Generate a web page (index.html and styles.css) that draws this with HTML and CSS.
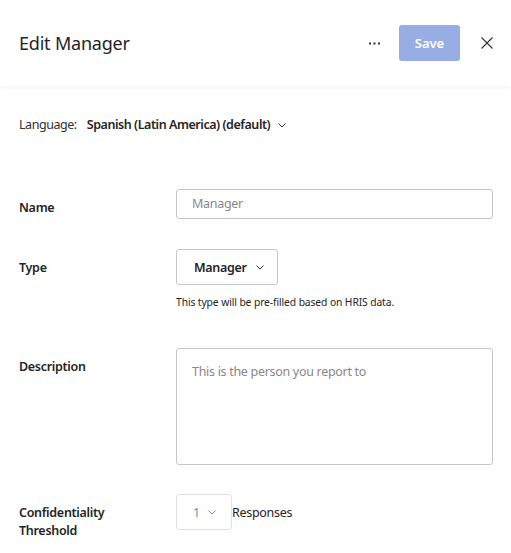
FILE: index.html
```html
<!DOCTYPE html>
<html>
<head>
<meta charset="utf-8">
<link rel="stylesheet" href="styles.css">
</head>
<body>
<div class="panel">
  <header class="header">
    <h1 class="title">Edit Manager</h1>
    <div class="actions">
      <svg class="more" width="11" height="3" viewBox="0 0 11 3"><rect x="0" y="0.5" width="2" height="2" fill="#323130"/><rect x="4.5" y="0.5" width="2" height="2" fill="#323130"/><rect x="9" y="0.5" width="2" height="2" fill="#323130"/></svg>
      <button class="save">Save</button>
      <svg class="close" width="12" height="12" viewBox="0 0 12 12"><path d="M0.5 0.5L11.5 11.5M11.5 0.5L0.5 11.5" stroke="#323130" stroke-width="1.1" fill="none"/></svg>
    </div>
  </header>
  <div class="content">
    <div class="lang">
      <span class="lang-label">Language:</span>
      <span class="lang-value">Spanish (Latin America) (default)</span>
      <svg class="chev" width="8" height="5" viewBox="0 0 8 5"><path d="M0.5 0.5L4 4L7.5 0.5" stroke="#323130" stroke-width="1" fill="none"/></svg>
    </div>
    <div class="row row-name">
      <div class="label">Name</div>
      <div class="field"><div class="input">Manager</div></div>
    </div>
    <div class="row row-type">
      <div class="label">Type</div>
      <div class="field">
        <div class="dropdown">Manager <svg class="chev" width="8" height="5" viewBox="0 0 8 5"><path d="M0.5 0.5L4 4L7.5 0.5" stroke="#323130" stroke-width="1" fill="none"/></svg></div>
        <div class="help">This type will be pre-filled based on HRIS data.</div>
      </div>
    </div>
    <div class="row row-desc">
      <div class="label">Description</div>
      <div class="field"><div class="textarea">This is the person you report to</div></div>
    </div>
    <div class="row row-thr">
      <div class="label">Confidentiality<br>Threshold</div>
      <div class="field thr">
        <div class="num">1 <svg class="chev" width="8" height="5" viewBox="0 0 8 5"><path d="M0.5 0.5L4 4L7.5 0.5" stroke="#8a8886" stroke-width="1" fill="none"/></svg></div>
        <span class="resp">Responses</span>
      </div>
    </div>
  </div>
</div>
</body>
</html>
```

FILE: styles.css
```css
* { box-sizing: border-box; }
html, body { margin: 0; padding: 0; background: #fff; }
body {
  font-family: "Noto Sans", "Open Sans", sans-serif;
  color: #323130;
  width: 511px;
  height: 553px;
  overflow: hidden;
}
.header {
  height: 86px;
  display: flex;
  align-items: center;
  justify-content: space-between;
  padding: 0 18px 0 19px;
  box-shadow: 0 1px 4px rgba(0,0,0,0.07);
  position: relative;
}
.title {
  margin: 0;
  font-size: 18px;
  font-weight: 400;
  color: #252423;
  letter-spacing: -0.2px;
}
.actions { display: flex; align-items: center; }
.more {
  display: block;
  margin-right: 19px;
}
.save {
  width: 61px;
  height: 36px;
  border: none;
  border-radius: 3px;
  background: #98ade4;
  color: #fff;
  font-family: inherit;
  font-size: 13px;
  font-weight: 600;
  margin-right: 21px;
  padding: 0;
}
.close { display: block; }
.content { padding: 30px 18px 0 19px; }
.lang {
  display: flex;
  align-items: center;
  font-size: 12.5px;
  letter-spacing: -0.45px;
  line-height: 18px;
  height: 18px;
}
.lang-label { margin-right: 10px; color: #323130; }
.lang-value { font-weight: 600; color: #252423; margin-right: 8px; }
.chev { display: block; }
.row {
  display: grid;
  grid-template-columns: 157px 1fr;
  align-items: start;
  font-size: 12.5px;
  letter-spacing: -0.3px;
}
.row-name { margin-top: 55px; }
.row-type { margin-top: 30px; }
.row-desc { margin-top: 39px; }
.row-thr { margin-top: 29px; }
.label {
  padding-top: 10px;
  line-height: 18px;
  font-weight: 600;
  color: #252423;
}
.input {
  height: 30px;
  border: 1px solid #c8c6c4;
  border-radius: 3px;
  padding: 0 15px;
  line-height: 28px;
  color: #8a8886;
}
.dropdown {
  display: inline-flex;
  align-items: center;
  height: 36px;
  width: 102px;
  border: 1px solid #c8c6c4;
  border-radius: 3px;
  padding: 0 0 0 17px;
  font-weight: 600;
  color: #252423;
  gap: 9px;
}
.help {
  margin-top: 10px;
  font-size: 10.3px;
  letter-spacing: -0.1px;
  line-height: 14px;
  color: #252423;
}
.textarea {
  height: 117px;
  border: 1px solid #c8c6c4;
  border-radius: 3px;
  padding: 14px 15px;
  line-height: 18px;
  color: #8a8886;
}
.thr { display: flex; align-items: center; }
.num {
  display: flex;
  align-items: center;
  width: 56px;
  height: 36px;
  border: 1px solid #e1dfdd;
  border-radius: 3px;
  padding-left: 16px;
  color: #8a8886;
  gap: 8px;
}
.resp { color: #252423; }
```
